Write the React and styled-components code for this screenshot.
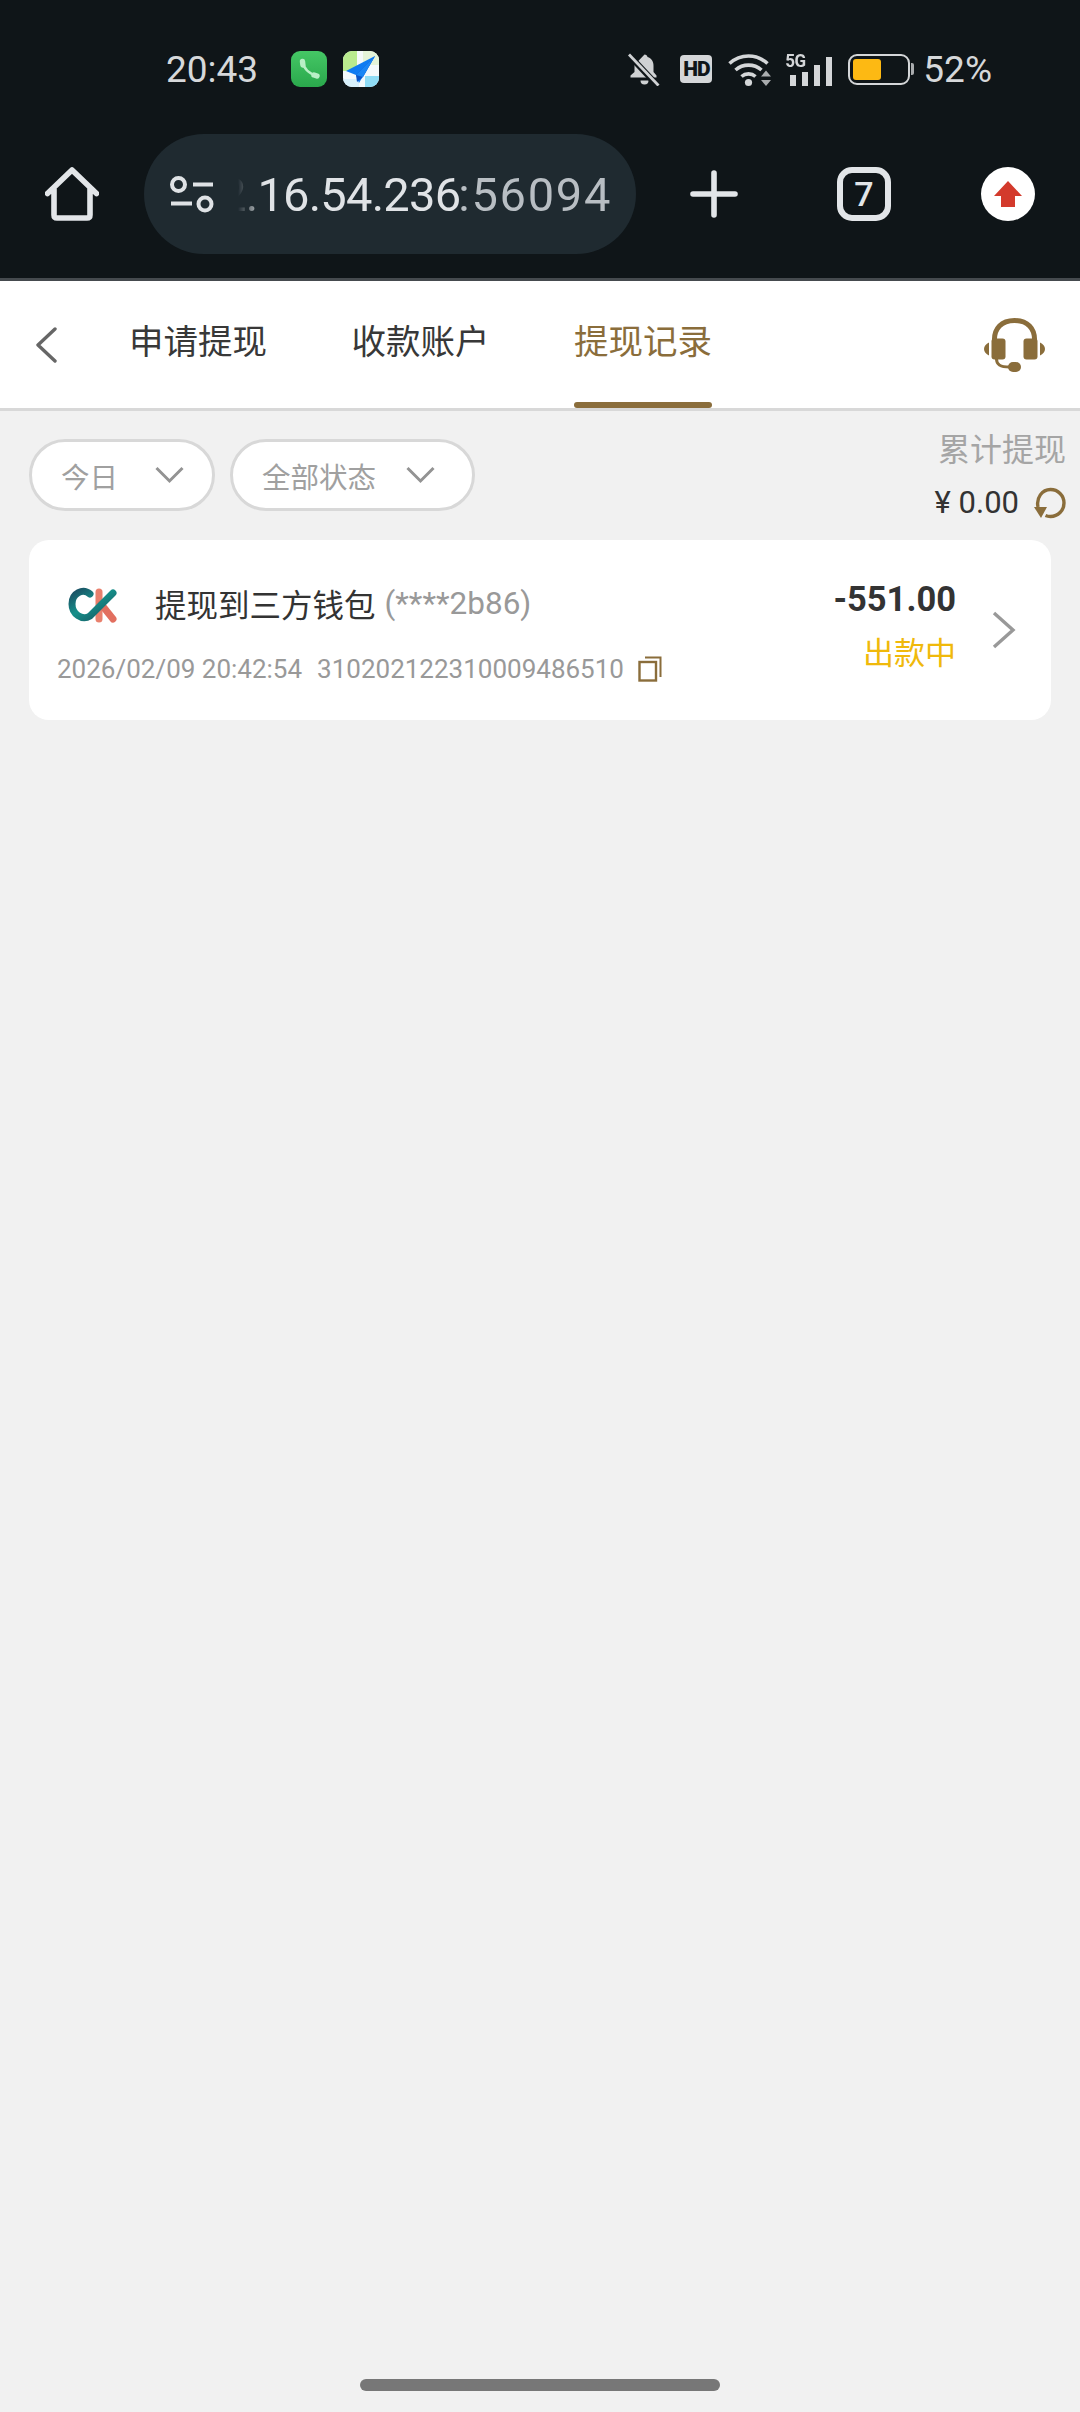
import React from "react";
import styled, { createGlobalStyle } from "styled-components";

const SANS = `Roboto, "Noto Sans CJK SC", sans-serif`;
const GOLD = "#8a6d3b";

export default function App() {
  return (
    <>
      <GlobalStyle />
      <Page>
        {/* PHONE + BROWSER CHROME */}
        <Chrome>
          <StatusBar>
            <Clock>20:43</Clock>
            <NotifyIcons>
              <PhoneApp />
              <MapApp />
            </NotifyIcons>
            <StatusIcons>
              <BellOff />
              <HdBadge>HD</HdBadge>
              <Wifi />
              <Signal />
              <Battery />
              <BatteryText>52%</BatteryText>
            </StatusIcons>
          </StatusBar>
          <Toolbar>
            <HomeIcon />
            <AddressPill>
              <SiteIcon />
              <UrlClip>
                <UrlHost>172.16.54.236</UrlHost>
                <UrlPort>:56094</UrlPort>
              </UrlClip>
            </AddressPill>
            <PlusIcon />
            <TabCount>7</TabCount>
            <UpdateDot>
              <UpArrow />
            </UpdateDot>
          </Toolbar>
        </Chrome>

        {/* TABS */}
        <NavBar>
          <BackIcon />
          <Tabs>
            <Tab>申请提现</Tab>
            <Tab>收款账户</Tab>
            <Tab $active>提现记录</Tab>
          </Tabs>
          <Headset />
        </NavBar>

        {/* FILTERS */}
        <FilterRow>
          <Pills>
            <Pill $width={186} $right={28}>
              今日
              <PillChevron />
            </Pill>
            <Pill $width={245} $right={37}>
              全部状态
              <PillChevron />
            </Pill>
          </Pills>
          <Summary>
            <SummaryLabel>累计提现</SummaryLabel>
            <SummaryAmount>
              ¥ 0.00
              <RefreshIcon />
            </SummaryAmount>
          </Summary>
        </FilterRow>

        {/* RECORD */}
        <Card>
          <CardMain>
            <CardTitle>
              <CkLogo />
              <TitleText>提现到三方钱包</TitleText>
              <Masked>(****2b86)</Masked>
            </CardTitle>
            <CardMeta>
              <span>2026/02/09 20:42:54</span>
              <span>310202122310009486510</span>
              <CopyIcon />
            </CardMeta>
          </CardMain>
          <CardSide>
            <Amount>-551.00</Amount>
            <Status>出款中</Status>
          </CardSide>
          <CardChevron />
        </Card>

        <HomeBar />
      </Page>
    </>
  );
}

// Icons
const PhoneApp = () => (
  <svg width="36" height="36" viewBox="0 0 36 36">
    <defs>
      <linearGradient id="phoneBg" x1="0" y1="0" x2="0" y2="1">
        <stop offset="0" stopColor="#45c765" />
        <stop offset="1" stopColor="#2aa84c" />
      </linearGradient>
    </defs>
    <rect width="36" height="36" rx="9" fill="url(#phoneBg)" />
    <g fill="none" stroke="#b9efc6" strokeLinecap="round">
      <path d="M12 11c.5 6 5 11 14 14" strokeWidth="2.600" />
      <path d="M11.500 10.500l.4 3.500" strokeWidth="5.400" />
      <path d="M23 24l3 1" strokeWidth="5.400" />
    </g>
  </svg>
);

const MapApp = () => (
  <svg width="36" height="36" viewBox="0 0 36 36">
    <defs>
      <clipPath id="mapClip">
        <rect width="36" height="36" rx="9" />
      </clipPath>
    </defs>
    <g clipPath="url(#mapClip)">
      <rect width="36" height="36" fill="#f4f9fb" />
      <rect width="14" height="20" fill="#b9eb8e" />
      <rect x="20" width="16" height="14" fill="#e4f3d8" />
      <rect x="22" y="25" width="14" height="11" fill="#8fdcf5" />
      <rect y="28" width="16" height="8" fill="#d8f0fb" />
    </g>
    <path d="M32 5L3 20l10 4 3 8z" fill="#0f7bf2" />
    <path d="M32 5L13 24l1 7 6-5z" fill="#0a55c8" />
    <path d="M32 5L13 24l7 2z" fill="#1a86f5" />
  </svg>
);

const BellOff = () => (
  <svg width="32" height="33" viewBox="0 0 32 33">
    <path
      d="M16.500 1.500c1.600 0 2.800 1 3 2.600 4 1.200 6 4.600 6 8.800v6l3 3.600v2H2.500v-2l4-3.600v-7z"
      fill="#cfd1d3"
    />
    <path d="M12.500 27.500h8a4 4 0 0 1-8 0z" fill="#cfd1d3" />
    <path d="M0 1l30 32" stroke="#0f1518" strokeWidth="6" />
    <path d="M1 1.500l29.500 31" stroke="#cfd1d3" strokeWidth="2.800" />
  </svg>
);

const Wifi = () => (
  <svg width="44" height="35" viewBox="0 0 44 35">
    <g fill="none" stroke="#d4d6d8" strokeWidth="3.600">
      <path d="M1.500 11.500c11-10 27-10 38 0" />
      <path d="M7.500 18c7.500-6.500 18.500-6.500 26 0" />
      <path d="M13.500 24.500c4-3.500 10-3.500 14 0" />
    </g>
    <circle cx="20.500" cy="30.500" r="3.600" fill="#d4d6d8" />
    <path d="M33 24.500l5-6 5 6zM33 28h10l-5 6z" fill="#a9acae" />
  </svg>
);

const Signal = () => (
  <SignalWrap>
    <FiveG>5G</FiveG>
    <SignalBars>
      <SignalBar $h={11} />
      <SignalBar $h={14} />
      <SignalBar $h={21} />
      <SignalBar $h={29} />
    </SignalBars>
  </SignalWrap>
);

const Battery = () => (
  <BatteryWrap>
    <BatteryBody>
      <BatteryFill />
    </BatteryBody>
    <BatteryTip />
  </BatteryWrap>
);

const HomeIcon = () => (
  <svg width="54" height="54" viewBox="0 0 54 54">
    <path
      d="M2.500 26.500L27 3l24.500 23.500M9 22v26c0 2 1 3 3 3h30c2 0 3-1 3-3V22"
      fill="none"
      stroke="#e2e5e8"
      strokeWidth="5.600"
      strokeLinecap="round"
      strokeLinejoin="round"
    />
  </svg>
);

const SiteIcon = () => (
  <svg width="44" height="37" viewBox="0 0 44 37">
    <g fill="none" stroke="#dfe2e5" strokeWidth="4">
      <circle cx="8.500" cy="8.500" r="6.500" />
      <circle cx="35" cy="28" r="6.500" />
      <path d="M23 8.500h20M1 27.500h21" />
    </g>
  </svg>
);

const PlusIcon = () => (
  <PlusWrap>
    <svg width="48" height="48" viewBox="0 0 48 48">
      <path
        d="M24 3v42M3 24h42"
        stroke="#e2e5e8"
        strokeWidth="5.600"
        strokeLinecap="round"
      />
    </svg>
  </PlusWrap>
);

const UpArrow = () => (
  <svg width="30" height="28" viewBox="0 0 30 28">
    <path d="M15 1L29 16h-7v11H8V16H1z" fill="#d33a2c" />
  </svg>
);

const BackIcon = () => (
  <BackWrap>
    <svg width="22" height="36" viewBox="0 0 22 36">
      <path
        d="M20 2L3 18l17 16"
        fill="none"
        stroke="#666"
        strokeWidth="3.400"
        strokeLinecap="round"
        strokeLinejoin="round"
      />
    </svg>
  </BackWrap>
);

const Headset = () => (
  <HeadsetWrap>
    <svg width="61" height="54" viewBox="0 0 61 54">
      <path
        d="M10.500 24C9.500 10 18 2.500 30.500 2.500S51.500 10 50.500 24"
        fill="none"
        stroke={GOLD}
        strokeWidth="5"
      />
      <rect x="7.500" y="20.500" width="14" height="21" rx="3" fill={GOLD} />
      <rect x="39.500" y="20.500" width="14" height="21" rx="3" fill={GOLD} />
      <path d="M5 24.500v13C2 36 0 34 0 31s2-5 5-6.500zM56 24.500v13c3-1.500 5-3.500 5-6.500s-2-5-5-6.500z" fill={GOLD} />
      <path d="M12.500 41c0 6 4 8 13 8" fill="none" stroke={GOLD} strokeWidth="3" />
      <rect x="24" y="44" width="13" height="10" rx="5" fill={GOLD} />
    </svg>
  </HeadsetWrap>
);

const PillChevron = () => (
  <ChevronSlot>
    <svg width="29" height="18" viewBox="0 0 29 18">
      <path d="M1.500 2l13 13 13-13" fill="none" stroke="#939393" strokeWidth="3" />
    </svg>
  </ChevronSlot>
);

const RefreshIcon = () => (
  <svg width="32" height="32" viewBox="0 0 32 32">
    <path
      d="M4 20C2 11 8 2.500 16.500 2.500 24 2.500 30 8.500 30 16S24 29.500 16.500 29.500c-2 0-3.500-.3-5-1"
      fill="none"
      stroke={GOLD}
      strokeWidth="3.400"
    />
    <path d="M0 20h13l-6 11z" fill={GOLD} />
  </svg>
);

const CkLogo = () => (
  <LogoWrap>
    <svg width="60" height="40" viewBox="0 0 60 40">
      <defs>
        <linearGradient id="ckTeal" x1="0" y1="0" x2="1" y2="1">
          <stop offset="0" stopColor="#1b4f63" />
          <stop offset="0.45" stopColor="#16908a" />
          <stop offset="1" stopColor="#17535f" />
        </linearGradient>
      </defs>
      <path d="M35 7v27" stroke="#e9806d" strokeWidth="7" strokeLinecap="round" />
      <path d="M37 19l12 15" stroke="#e26f5f" strokeWidth="7" strokeLinecap="round" />
      <path
        d="M26 9C19 3 8 8 8 19c0 10 10 17 18 12L49 8"
        fill="none"
        stroke="url(#ckTeal)"
        strokeWidth="7"
        strokeLinecap="round"
      />
    </svg>
  </LogoWrap>
);

const CopyIcon = () => (
  <CopyWrap>
    <svg width="24" height="26" viewBox="0 0 24 26">
      <path d="M7 1.500h15.500V21" fill="none" stroke={GOLD} strokeWidth="2" />
      <rect x="1.500" y="6" width="16.500" height="18.500" fill="none" stroke={GOLD} strokeWidth="2.400" />
    </svg>
  </CopyWrap>
);

const CardChevron = () => (
  <ChevronWrap>
    <svg width="26" height="38" viewBox="0 0 26 38">
      <path d="M3 2l19 17L3 36" fill="none" stroke="#999" strokeWidth="3.400" />
    </svg>
  </ChevronWrap>
);

// Styled Components
const GlobalStyle = createGlobalStyle`
  html, body {
    margin: 0;
    padding: 0;
    background: #f1f1f1;
  }
  * {
    box-sizing: border-box;
  }
`;

const Page = styled.div`
  width: 1080px;
  height: 2412px;
  display: flex;
  flex-direction: column;
  overflow: hidden;
  background: #f1f1f1;
  font-family: ${SANS};
`;

const Chrome = styled.div`
  height: 281px;
  background: #0f1518;
  border-bottom: 3px solid #454a4e;
`;

const StatusBar = styled.div`
  height: 134px;
  display: flex;
  align-items: center;
  padding: 4px 88px 0 166px;
  color: #d6d8da;
`;

const Clock = styled.div`
  width: 125px;
  font-size: 37px;
`;

const NotifyIcons = styled.div`
  display: flex;
  gap: 16px;
`;

const StatusIcons = styled.div`
  margin-left: auto;
  display: flex;
  align-items: center;
`;

const HdBadge = styled.div`
  width: 32px;
  height: 28px;
  margin: 0 16px 0 20px;
  border-radius: 4px;
  background: #d4d6d8;
  color: #0f1518;
  font-size: 21px;
  font-weight: 900;
  line-height: 28px;
  text-align: center;
  letter-spacing: -1px;
`;

const SignalWrap = styled.div`
  position: relative;
  width: 47px;
  height: 34px;
  margin: 0 16px 0 13px;
`;

const FiveG = styled.span`
  position: absolute;
  left: 0;
  top: -2px;
  font-size: 17px;
  font-weight: 700;
  line-height: 20px;
  letter-spacing: -0.5px;
  color: #d4d6d8;
  transform: scaleY(1.1);
`;

const SignalBars = styled.div`
  height: 100%;
  display: flex;
  align-items: flex-end;
  justify-content: flex-end;
  gap: 5.500px;
`;

const SignalBar = styled.div`
  width: 6.500px;
  height: ${(p) => p.$h}px;
  background: #d4d6d8;
`;

const BatteryWrap = styled.div`
  display: flex;
  align-items: center;
`;

const BatteryBody = styled.div`
  width: 62px;
  height: 31px;
  padding: 3px;
  border: 2px solid #d4d6d8;
  border-radius: 9px;
`;

const BatteryFill = styled.div`
  width: 28px;
  height: 100%;
  border-radius: 3px;
  background: #fdb913;
`;

const BatteryTip = styled.div`
  width: 3px;
  height: 12px;
  margin-left: 1px;
  border-radius: 0 2px 2px 0;
  background: #a9acae;
`;

const BatteryText = styled.div`
  margin-left: 9px;
  font-size: 37px;
`;

const Toolbar = styled.div`
  height: 120px;
  display: flex;
  align-items: center;
  padding-left: 45px;
`;

const AddressPill = styled.div`
  width: 492px;
  height: 120px;
  margin-left: 45px;
  padding: 0 24px 0 26px;
  display: flex;
  align-items: center;
  border-radius: 60px;
  background: #1f2a30;
`;

const UrlClip = styled.div`
  flex: 1;
  margin-left: 24px;
  display: flex;
  justify-content: flex-end;
  overflow: hidden;
  white-space: nowrap;
  font-size: 47px;
  mask-image: linear-gradient(to right, transparent 0, #000 26px);
`;

const UrlHost = styled.span`
  color: #e0e3e6;
  letter-spacing: -0.750px;
`;

const UrlPort = styled.span`
  margin-left: -2px;
  color: #b8bec3;
  letter-spacing: 1.700px;
`;

const PlusWrap = styled.div`
  display: flex;
  margin-left: 54px;
`;

const TabCount = styled.div`
  width: 54px;
  height: 54px;
  margin-left: 99px;
  border: 6px solid #e2e5e8;
  border-radius: 15px;
  color: #e2e5e8;
  font-size: 34px;
  font-weight: 500;
  line-height: 42px;
  text-align: center;
`;

const UpdateDot = styled.div`
  width: 54px;
  height: 54px;
  margin-left: 90px;
  display: flex;
  align-items: center;
  justify-content: center;
  border-radius: 50%;
  background: #fff;
`;

const NavBar = styled.div`
  height: 130px;
  display: flex;
  align-items: center;
  background: #fff;
  border-bottom: 3px solid #d8d8d8;
`;

const BackWrap = styled.div`
  display: flex;
  margin-left: 35px;
`;

const Tabs = styled.div`
  height: 100%;
  display: flex;
  gap: 84.500px;
  margin-left: 72px;
`;

const Tab = styled.div`
  position: relative;
  width: 138px;
  font-size: 34.500px;
  line-height: 122px;
  white-space: nowrap;
  color: ${(p) => (p.$active ? GOLD : "#383838")};

  ${(p) =>
    p.$active &&
    `
    &::after {
      content: "";
      position: absolute;
      left: 0;
      right: 0;
      bottom: 0;
      height: 6px;
      border-radius: 3px;
      background: ${GOLD};
    }
  `}
`;

const HeadsetWrap = styled.div`
  display: flex;
  margin-left: auto;
  margin-right: 35px;
`;

const FilterRow = styled.div`
  height: 129px;
  display: flex;
  justify-content: space-between;
  align-items: flex-start;
  padding: 0 14px 0 29px;
`;

const Pills = styled.div`
  display: flex;
  gap: 15px;
  padding-top: 28px;
`;

const Pill = styled.div`
  width: ${(p) => p.$width}px;
  height: 72px;
  display: flex;
  align-items: center;
  justify-content: space-between;
  padding: 0 ${(p) => p.$right}px 0 29px;
  border: 3px solid #d8d8d8;
  border-radius: 36px;
  background: #fff;
  color: #a0a0a0;
  font-size: 28.500px;
`;

const ChevronSlot = styled.span`
  display: flex;
`;

const Summary = styled.div`
  display: flex;
  flex-direction: column;
  align-items: flex-end;
  padding-top: 19px;
`;

const SummaryLabel = styled.div`
  font-size: 32px;
  line-height: 40px;
  color: #a5a5a5;
`;

const SummaryAmount = styled.div`
  display: flex;
  align-items: center;
  gap: 15px;
  margin-top: 16px;
  font-size: 31px;
  line-height: 34px;
  color: #333;
`;

const Card = styled.div`
  height: 180px;
  margin: 0 29px;
  display: flex;
  align-items: flex-start;
  border-radius: 20px;
  background: #fff;
`;

const CardMain = styled.div`
  flex: 1;
  padding: 43px 0 0 28px;
`;

const CardTitle = styled.div`
  height: 40px;
  display: flex;
  align-items: center;
  font-size: 31.500px;
  white-space: nowrap;
`;

const LogoWrap = styled.div`
  display: flex;
  width: 91px;
  margin-left: 7px;
  margin-top: 3px;
`;

const TitleText = styled.span`
  color: #333;
`;

const Masked = styled.span`
  margin-left: 9px;
  color: #999;
`;

const CardMeta = styled.div`
  display: flex;
  align-items: center;
  gap: 15px;
  margin-top: 31px;
  height: 30px;
  font-size: 26px;
  color: #999;
`;

const CopyWrap = styled.div`
  display: flex;
  margin-left: -1px;
`;

const CardSide = styled.div`
  display: flex;
  flex-direction: column;
  align-items: flex-end;
  padding-top: 39px;
`;

const Amount = styled.div`
  font-size: 34.500px;
  font-weight: 700;
  line-height: 40px;
  color: #333;
`;

const Status = styled.div`
  margin-top: 15px;
  font-size: 31px;
  line-height: 40px;
  color: #f0b90b;
`;

const ChevronWrap = styled.div`
  display: flex;
  margin: 71px 34px 0 35px;
`;

const HomeBar = styled.div`
  width: 360px;
  height: 12px;
  margin: auto auto 21px;
  border-radius: 6px;
  background: #777;
`;
